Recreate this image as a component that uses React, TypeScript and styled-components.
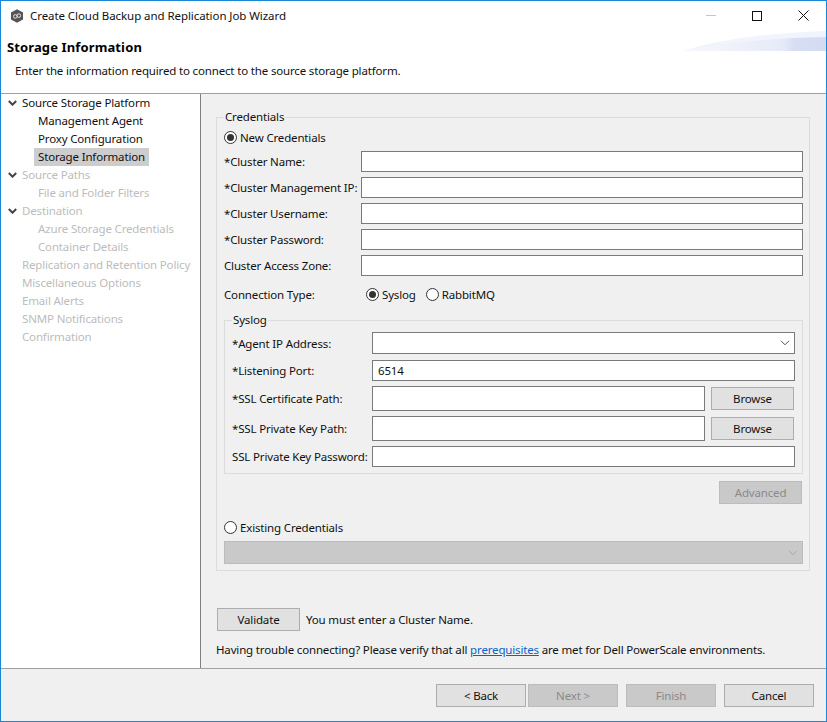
import React from "react";
import styled, { createGlobalStyle } from "styled-components";

const GlobalStyle = createGlobalStyle`
  html, body {
    margin: 0;
    padding: 0;
    background: #ffffff;
  }
  * {
    box-sizing: border-box;
  }
  body {
    font-family: "Noto Sans", "Open Sans", sans-serif;
    font-size: 11.5px;
    letter-spacing: -0.16px;
    color: #111111;
  }
`;

type NavEntry = {
  label: string;
  indent?: boolean;
  expander?: boolean;
  active?: boolean;
  selected?: boolean;
};

const navEntries: NavEntry[] = [
  { label: "Source Storage Platform", expander: true, active: true },
  { label: "Management Agent", indent: true, active: true },
  { label: "Proxy Configuration", indent: true, active: true },
  { label: "Storage Information", indent: true, active: true, selected: true },
  { label: "Source Paths", expander: true },
  { label: "File and Folder Filters", indent: true },
  { label: "Destination", expander: true },
  { label: "Azure Storage Credentials", indent: true },
  { label: "Container Details", indent: true },
  { label: "Replication and Retention Policy" },
  { label: "Miscellaneous Options" },
  { label: "Email Alerts" },
  { label: "SNMP Notifications" },
  { label: "Confirmation" },
];

const credentialFields = [
  "*Cluster Name:",
  "*Cluster Management IP:",
  "*Cluster Username:",
  "*Cluster Password:",
  "Cluster Access Zone:",
];

function Logo() {
  return (
    <svg width="14" height="14" viewBox="0 0 14 14">
      <path d="M7 0.3 L13 3.6 V10.4 L7 13.7 L1 10.4 V3.6 Z" fill="#555555" />
      <circle cx="5.3" cy="7.4" r="1.8" fill="none" stroke="#e6e6e6" strokeWidth="1" />
      <circle cx="8.8" cy="6.6" r="1.8" fill="none" stroke="#e6e6e6" strokeWidth="1" />
    </svg>
  );
}

function Banner() {
  return (
    <svg width="142" height="20" viewBox="0 0 142 20">
      <defs>
        <linearGradient id="bannerFill" x1="0" x2="1" y1="0" y2="0">
          <stop offset="0" stopColor="#f8f9fd" />
          <stop offset="0.7" stopColor="#e6eaf8" />
          <stop offset="0.78" stopColor="#d6ddf4" />
          <stop offset="1" stopColor="#d4dcf4" />
        </linearGradient>
      </defs>
      <path d="M0 20 C28 10 80 2 142 0 V20 Z" fill="#f1f4fc" />
      <path d="M0 20 C36 12 86 7 142 6 V20 Z" fill="url(#bannerFill)" />
    </svg>
  );
}

function NavChevron() {
  return (
    <svg width="9" height="6" viewBox="0 0 9 6">
      <path d="M0.8 1 L4.5 4.7 L8.2 1" fill="none" stroke="#444444" strokeWidth="2" />
    </svg>
  );
}

function SelectChevron({ dim }: { dim?: boolean }) {
  return (
    <svg width="10" height="6" viewBox="0 0 10 6">
      <path
        d="M1 0.8 L5 4.8 L9 0.8"
        fill="none"
        stroke={dim ? "#a8a8a8" : "#555555"}
        strokeWidth="1"
      />
    </svg>
  );
}

export default function App() {
  return (
    <>
      <GlobalStyle />
      <Window>
        <TitleBar>
          <TitleIcon>
            <Logo />
          </TitleIcon>
          <TitleText>Create Cloud Backup and Replication Job Wizard</TitleText>
          <WindowControls>
            <Control>
              <MinimizeGlyph />
            </Control>
            <Control>
              <MaximizeGlyph />
            </Control>
            <Control>
              <svg width="11" height="11" viewBox="0 0 11 11">
                <path d="M0.5 0.5 L10.5 10.5 M10.5 0.5 L0.5 10.5" stroke="#111" strokeWidth="1" />
              </svg>
            </Control>
          </WindowControls>
        </TitleBar>

        <Header>
          <BannerSlot>
            <Banner />
          </BannerSlot>
          <HeaderTitle>Storage Information</HeaderTitle>
          <HeaderText>Enter the information required to connect to the source storage platform.</HeaderText>
        </Header>

        <Body>
          <Nav>
            {navEntries.map((entry) => (
              <NavRow key={entry.label} $indent={entry.indent}>
                <NavExpander $indent={entry.indent}>{entry.expander && <NavChevron />}</NavExpander>
                <NavLabel $active={entry.active} $selected={entry.selected}>
                  {entry.label}
                </NavLabel>
              </NavRow>
            ))}
          </Nav>

          <Main>
            <Group>
              <GroupLegend>Credentials</GroupLegend>
              <RadioRow>
                <Radio $checked />
                <span>New Credentials</span>
              </RadioRow>
              {credentialFields.map((label) => (
                <FieldRow key={label}>
                  <FieldLabel>{label}</FieldLabel>
                  <TextBox />
                </FieldRow>
              ))}
              <ConnectionRow>
                <FieldLabel>Connection Type:</FieldLabel>
                <ConnectionOptions>
                  <RadioOption>
                    <Radio $checked />
                    <span>Syslog</span>
                  </RadioOption>
                  <RadioOption>
                    <Radio />
                    <span>RabbitMQ</span>
                  </RadioOption>
                </ConnectionOptions>
              </ConnectionRow>

              <InnerGroup>
                <InnerLegend>Syslog</InnerLegend>
                <InnerRow>
                  <InnerLabel>*Agent IP Address:</InnerLabel>
                  <SelectBox>
                    <SelectChevron />
                  </SelectBox>
                </InnerRow>
                <InnerRow $gap={6}>
                  <InnerLabel>*Listening Port:</InnerLabel>
                  <TextBox defaultValue="6514" />
                </InnerRow>
                <InnerRow>
                  <InnerLabel>*SSL Certificate Path:</InnerLabel>
                  <PathBox />
                  <BrowseButton>Browse</BrowseButton>
                </InnerRow>
                <InnerRow>
                  <InnerLabel>*SSL Private Key Path:</InnerLabel>
                  <PathBox />
                  <BrowseButton>Browse</BrowseButton>
                </InnerRow>
                <InnerRow>
                  <InnerLabel>SSL Private Key Password:</InnerLabel>
                  <TextBox />
                </InnerRow>
              </InnerGroup>

              <AdvancedRow>
                <PushButton disabled>Advanced</PushButton>
              </AdvancedRow>

              <ExistingRow>
                <Radio />
                <span>Existing Credentials</span>
              </ExistingRow>
              <DisabledSelect>
                <SelectChevron dim />
              </DisabledSelect>
            </Group>

            <ValidateRow>
              <PushButton>Validate</PushButton>
              <span>You must enter a Cluster Name.</span>
            </ValidateRow>
            <HelpRow>
              Having trouble connecting? Please verify that all <HelpLink href="#">prerequisites</HelpLink> are met for
              Dell PowerScale environments.
            </HelpRow>
          </Main>
        </Body>

        <Footer>
          <FooterButton>&lt; Back</FooterButton>
          <FooterButton disabled>Next &gt;</FooterButton>
          <FinishButton disabled>Finish</FinishButton>
          <FinishButton>Cancel</FinishButton>
        </Footer>
      </Window>
    </>
  );
}

const Window = styled.div`
  width: 827px;
  height: 722px;
  display: flex;
  flex-direction: column;
  border: 1px solid #1a86d9;
  background: #ffffff;
  overflow: hidden;
`;

const TitleBar = styled.div`
  height: 30px;
  display: flex;
  align-items: center;
  padding-left: 9px;
  flex: none;
`;

const TitleIcon = styled.div`
  width: 14px;
  height: 14px;
  display: flex;
  margin-right: 6px;
`;

const TitleText = styled.div`
  flex: 1;
  padding-bottom: 1px;
  letter-spacing: -0.07px;
`;

const WindowControls = styled.div`
  display: flex;
  height: 30px;
  padding-bottom: 1px;
`;

const Control = styled.div`
  width: 46px;
  display: flex;
  align-items: center;
  justify-content: center;
`;

const MinimizeGlyph = styled.div`
  width: 10px;
  height: 1px;
  background: #c4c4c4;
`;

const MaximizeGlyph = styled.div`
  width: 10px;
  height: 10px;
  border: 1px solid #111111;
`;

const Header = styled.div`
  position: relative;
  height: 63px;
  flex: none;
  padding: 7px 0 0 6px;
  background: #ffffff;
  border-bottom: 1px solid #a0a0a0;
`;

const BannerSlot = styled.div`
  position: absolute;
  top: 0;
  right: 0;
  width: 142px;
  height: 20px;
  display: flex;
`;

const HeaderTitle = styled.div`
  font-size: 13px;
  font-weight: 700;
  line-height: 18px;
  letter-spacing: 0.12px;
  color: #000000;
`;

const HeaderText = styled.div`
  margin: 6px 0 0 8px;
  line-height: 18px;
`;

const Body = styled.div`
  height: 575px;
  flex: none;
  display: flex;
  border-bottom: 1px solid #a0a0a0;
`;

const Nav = styled.div`
  width: 200px;
  flex: none;
  border-right: 1px solid #808080;
  background: #ffffff;
`;

const NavRow = styled.div<{ $indent?: boolean }>`
  height: 18px;
  display: flex;
  align-items: center;
  padding-left: ${(props) => (props.$indent ? 33 : 7)}px;
`;

const NavExpander = styled.div<{ $indent?: boolean }>`
  width: ${(props) => (props.$indent ? 0 : 10)}px;
  flex: none;
  display: flex;
  align-items: center;
`;

const NavLabel = styled.div<{ $active?: boolean; $selected?: boolean }>`
  height: 18px;
  line-height: 18px;
  padding: 0 4px;
  color: ${(props) => (props.$active ? "#111111" : "#bcbcbc")};
  background: ${(props) => (props.$selected ? "#cdcdcd" : "transparent")};
  white-space: nowrap;
`;

const Main = styled.div`
  flex: 1;
  min-width: 0;
  padding: 15px 16px 0 15px;
  background: #f0f0f0;
`;

const Group = styled.fieldset`
  margin: 0;
  padding: 3px 6px 6px 7px;
  border: 1px solid #dcdcdc;
  min-width: 0;
`;

const GroupLegend = styled.legend`
  padding: 0 1px;
  line-height: 16px;
`;

const RadioRow = styled.div`
  height: 18px;
  display: flex;
  align-items: center;
  gap: 3px;
`;

const RadioOption = styled(RadioRow)``;

const ExistingRow = styled(RadioRow)`
  margin-top: 14px;
`;

const Radio = styled.span<{ $checked?: boolean }>`
  width: 13px;
  height: 13px;
  flex: none;
  display: flex;
  align-items: center;
  justify-content: center;
  border: 1px solid #333333;
  border-radius: 50%;
  background: #ffffff;

  &::after {
    content: "";
    width: 7px;
    height: 7px;
    border-radius: 50%;
    background: ${(props) => (props.$checked ? "#333333" : "transparent")};
  }
`;

const FieldRow = styled.div`
  height: 21px;
  margin-top: 5px;
  display: flex;
  align-items: center;
`;

const FieldLabel = styled.div`
  width: 137px;
  flex: none;
  white-space: nowrap;
`;

const TextBox = styled.input.attrs({ type: "text" })`
  flex: 1;
  min-width: 0;
  height: 21px;
  padding: 0 5px;
  border: 1px solid #7a7a7a;
  border-radius: 0;
  outline: none;
  background: #ffffff;
  font: inherit;
  letter-spacing: inherit;
  color: #111111;
`;

const ConnectionRow = styled.div`
  height: 18px;
  margin-top: 9px;
  display: flex;
  align-items: center;
`;

const ConnectionOptions = styled.div`
  display: flex;
  gap: 10px;
  margin-left: 5px;
`;

const InnerGroup = styled.fieldset`
  margin: 9px 0 0 0;
  padding: 4px 7px 6px 7px;
  border: 1px solid #dcdcdc;
  min-width: 0;
`;

const InnerLegend = styled.legend`
  padding: 0 1px;
  line-height: 16px;
`;

const InnerRow = styled.div<{ $gap?: number }>`
  display: flex;
  align-items: center;
  margin-top: ${(props) => props.$gap ?? 5}px;

  &:nth-of-type(1) {
    margin-top: 0;
  }
`;

const InnerLabel = styled.div`
  width: 140px;
  flex: none;
  white-space: nowrap;
`;

const SelectBox = styled.div`
  flex: 1;
  height: 22px;
  display: flex;
  align-items: center;
  justify-content: flex-end;
  padding-right: 4px;
  border: 1px solid #7a7a7a;
  background: #ffffff;
`;

const PathBox = styled(TextBox)`
  flex: none;
  width: 333px;
  height: 25px;
`;

const PushButton = styled.button`
  width: 83px;
  height: 23px;
  flex: none;
  padding: 0;
  border: 1px solid #adadad;
  border-radius: 0;
  background: #e1e1e1;
  font: inherit;
  letter-spacing: inherit;
  color: #111111;

  &:disabled {
    border-color: #bcbcbc;
    background: #c9c9c9;
    color: #8a8a8a;
  }
`;

const BrowseButton = styled(PushButton)`
  margin-left: 6px;
`;

const AdvancedRow = styled.div`
  margin-top: 7px;
  padding-right: 1px;
  display: flex;
  justify-content: flex-end;
`;

const DisabledSelect = styled.div`
  height: 23px;
  margin-top: 5px;
  display: flex;
  align-items: center;
  justify-content: flex-end;
  padding-right: 4px;
  border: 1px solid #bcbcbc;
  background: #c9c9c9;
`;

const ValidateRow = styled.div`
  margin-top: 37px;
  padding-left: 1px;
  display: flex;
  align-items: center;
  gap: 6px;
`;

const HelpRow = styled.div`
  margin-top: 10px;
  line-height: 18px;
  white-space: nowrap;
`;

const HelpLink = styled.a`
  color: #0a62c9;
  text-decoration: underline;
`;

const Footer = styled.div`
  flex: 1;
  display: flex;
  align-items: flex-start;
  justify-content: flex-end;
  padding: 15px 12px 0 0;
  background: #f0f0f0;
`;

const FooterButton = styled(PushButton)`
  width: 90px;
  margin-left: 2px;
`;

const FinishButton = styled(FooterButton)`
  margin-left: 8px;
`;
